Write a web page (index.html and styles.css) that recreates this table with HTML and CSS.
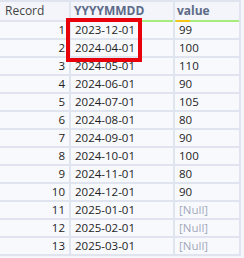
FILE: index.html
```html
<!DOCTYPE html>
<html>
<head>
<meta charset="utf-8">
<link rel="stylesheet" href="styles.css">
</head>
<body>
<div class="wrap">
  <div class="grid">
    <div class="hc rec">Record</div>
    <div class="hc key">YYYYMMDD</div>
    <div class="hc val">value</div>

    <div class="c num">1</div><div class="c">2023-12-01</div><div class="c">99</div>
    <div class="c num">2</div><div class="c">2024-04-01</div><div class="c">100</div>
    <div class="c num">3</div><div class="c">2024-05-01</div><div class="c">110</div>
    <div class="c num">4</div><div class="c">2024-06-01</div><div class="c">90</div>
    <div class="c num">5</div><div class="c">2024-07-01</div><div class="c">105</div>
    <div class="c num">6</div><div class="c">2024-08-01</div><div class="c">80</div>
    <div class="c num">7</div><div class="c">2024-09-01</div><div class="c">90</div>
    <div class="c num">8</div><div class="c">2024-10-01</div><div class="c">100</div>
    <div class="c num">9</div><div class="c">2024-11-01</div><div class="c">80</div>
    <div class="c num">10</div><div class="c">2024-12-01</div><div class="c">90</div>
    <div class="c num">11</div><div class="c">2025-01-01</div><div class="c null">[Null]</div>
    <div class="c num">12</div><div class="c">2025-02-01</div><div class="c null">[Null]</div>
    <div class="c num">13</div><div class="c">2025-03-01</div><div class="c null">[Null]</div>
  </div>
  <div class="highlight"></div>
</div>
</body>
</html>
```
FILE: styles.css
```css
html, body {
  margin: 0;
  padding: 0;
  background: #f4f6fb;
}
body {
  font-family: "Open Sans", "Noto Sans", sans-serif;
  font-size: 12px;
  color: #1e1e1e;
}
.wrap {
  position: relative;
  width: 244px;
  height: 258px;
  overflow: hidden;
}
.grid {
  display: grid;
  grid-template-columns: 71px 104px 66px;
  grid-template-rows: 22px;
  grid-auto-rows: 18px;
}
.hc {
  box-sizing: border-box;
  height: 22px;
  border-top: 2px solid #dfe4ee;
  border-right: 2px solid #dfe4ee;
  background-color: #f3f5fa;
  line-height: 17px;
  padding-left: 3px;
  font-weight: bold;
  color: #5d6b88;
}
.hc.rec {
  font-weight: normal;
  color: #444;
  padding-left: 5px;
  border-bottom: 2px solid #dfe4ee;
}
.hc.key {
  background: linear-gradient(#a6ec7c, #a6ec7c) left bottom / 100% 2px no-repeat, #f3f5fa;
}
.hc.val {
  padding-left: 2px;
  background:
    linear-gradient(#f5c518, #f5c518) 1px 100% / 14px 2px no-repeat,
    linear-gradient(#a6ec7c, #a6ec7c) left bottom / 100% 2px no-repeat,
    #f3f5fa;
}
.c {
  box-sizing: border-box;
  height: 18px;
  border-right: 2px solid #dfe4ee;
  border-bottom: 2px solid #dfe4ee;
  background: #f8f9fd;
  font-size: 11.5px;
  line-height: 16px;
  padding-left: 4px;
  white-space: nowrap;
}
.c.num {
  text-align: right;
  padding-left: 0;
  padding-right: 4px;
}
.c.null {
  color: #a2a9bb;
}
.highlight {
  position: absolute;
  left: 66px;
  top: 18px;
  width: 76px;
  height: 44px;
  box-sizing: border-box;
  border: 4px solid #e8000b;
}
```
